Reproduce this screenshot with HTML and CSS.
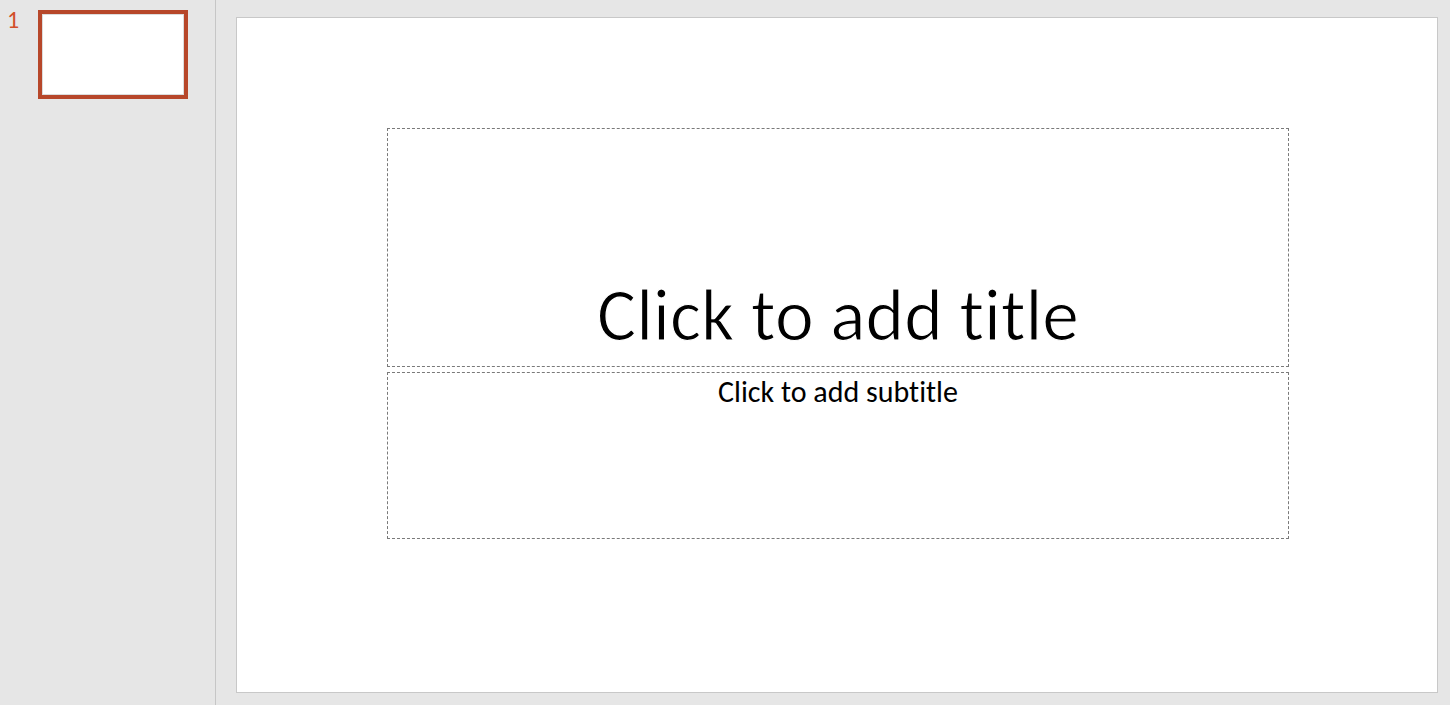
FILE: index.html
```html
<!doctype html>
<html lang="en">

<head>
    <meta charset="UTF-8">
    <link rel="stylesheet" href="styles.css">
    <title>Presentation</title>
</head>

<body>
    <aside class="thumbs">
        <div class="thumbRow">
            <span class="slideNum">1</span>
            <div class="thumb">
                <div class="thumbInner"></div>
            </div>
        </div>
    </aside>
    <main class="stage">
        <div class="slide">
            <div class="placeholder titleBox">
                <p class="titleText">Click to add title</p>
            </div>
            <div class="placeholder subtitleBox">
                <p class="subtitleText">Click to add subtitle</p>
            </div>
        </div>
    </main>
</body>

</html>
```

FILE: styles.css
```css
* {
    margin: 0;
    padding: 0;
    box-sizing: border-box;
}

body {
    display: flex;
    width: 1450px;
    height: 705px;
    overflow: hidden;
    background-color: #e6e6e6;
    font-family: Carlito, 'Open Sans', 'Noto Sans', sans-serif;
    font-variant-ligatures: none;
}

/* 左侧缩略图栏 */
.thumbs {
    width: 216px;
    height: 100%;
    border-right: 1px solid #c6c6c6;
    padding: 8px 0 0 7px;
}

.thumbRow {
    display: flex;
    align-items: flex-start;
}

.slideNum {
    width: 31px;
    font-size: 24px;
    line-height: 24px;
    color: #d24f2a;
}

.thumb {
    width: 150px;
    height: 89px;
    margin-top: 2px;
    border: 4px solid #b7472a;
}

.thumbInner {
    width: 100%;
    height: 100%;
    background-color: #fff;
    border: 1px solid #dcdcdc;
}

/* 编辑区 */
.stage {
    flex: 1;
    padding: 17px 12px 12px 20px;
}

.slide {
    width: 100%;
    height: 100%;
    background-color: #fff;
    border: 1px solid #c8c8c8;
    padding: 110px 0 0 150px;
    display: flex;
    flex-direction: column;
    gap: 5px;
}

.placeholder {
    width: 902px;
    border: 1px dashed #7a7a7a;
    display: flex;
    justify-content: center;
}

.titleBox {
    height: 239px;
    align-items: flex-end;
}

.subtitleBox {
    height: 167px;
    align-items: flex-start;
}

/* 标题用白色描边把字形压细，接近细体 */
.titleText {
    font-size: 73.5px;
    line-height: 1;
    color: #000;
    -webkit-text-stroke: 1.2px #fff;
    margin-bottom: 14px;
}

.subtitleText {
    font-size: 30px;
    line-height: 1;
    color: #000;
    margin-top: 4px;
}
```
